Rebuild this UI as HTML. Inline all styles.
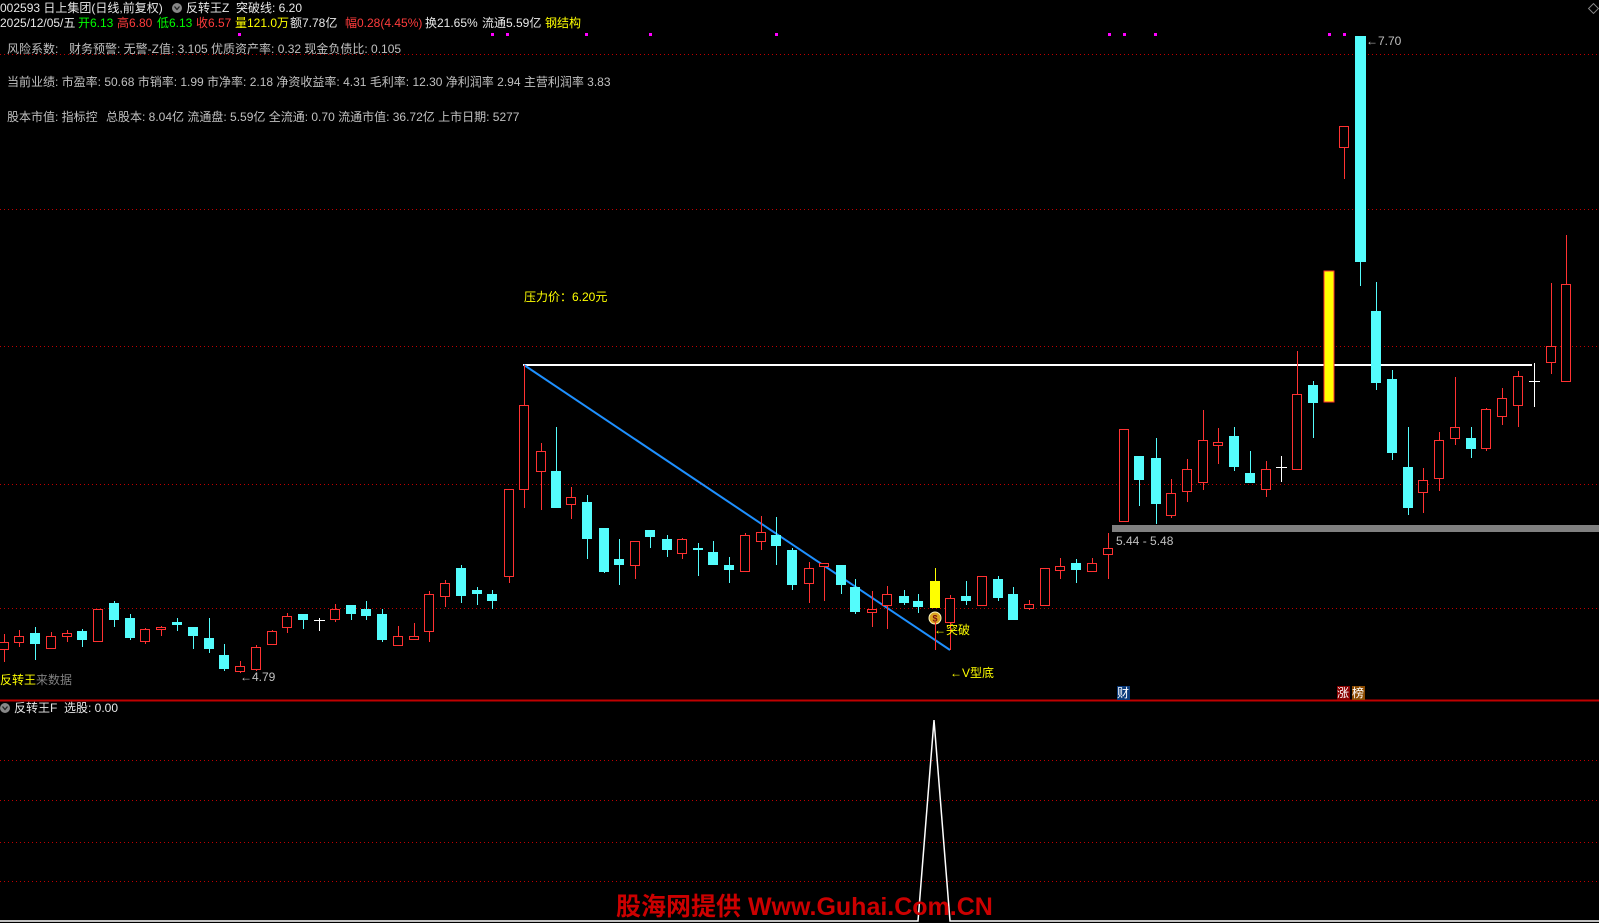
<!DOCTYPE html>
<html><head><meta charset="utf-8">
<style>
html,body{margin:0;padding:0;background:#000;}
body{width:1599px;height:923px;position:relative;overflow:hidden;font-family:"Liberation Sans","Noto Sans CJK SC",sans-serif;font-size:12px;}
.t{position:absolute;white-space:nowrap;line-height:14px;}
.w{color:#e8e8e8}.g{color:#c0c0c0}.gr{color:#00ff00}.r{color:#ff3c3c}.y{color:#ffff00}
svg{position:absolute;left:0;top:0;}
</style></head><body>
<svg width="1599" height="923" viewBox="0 0 1599 923">
<g stroke="#c00000" stroke-width="1" stroke-dasharray="1 3">
<path d="M0 54.5H1599M0 209.5H1599M0 346.5H1599M0 484.5H1599M0 608.5H1599M0 760.5H1599M0 800.5H1599M0 842.5H1599M0 881.5H1599"/>
</g>
<line x1="0" y1="700.5" x2="1599" y2="700.5" stroke="#c00000" stroke-width="2"/>
<rect x="1112" y="525" width="487" height="7" fill="#808080"/>
<line x1="523" y1="365" x2="1532" y2="365" stroke="#fff" stroke-width="2"/>
<line x1="524" y1="365" x2="950" y2="650" stroke="#1e90ff" stroke-width="2"/>
<g stroke="#ff3232" stroke-width="1" fill="#000">
<path d="M4.5 634V662M19.5 630V647M51.5 632V648M67.5 630V642M98.5 609V642M145.5 628V644M161.5 626V636M240.5 661V673M256.5 645V671M272.5 630V644M287.5 613V633M335.5 604V622M398.5 626V645M414.5 623V640M429.5 591V642M445.5 580V607M509.5 489V583M524.5 365V508M541.5 443V510M571.5 487V519M635.5 541V579M682.5 538V559M745.5 533V572M761.5 516V550M809.5 562V603M824.5 563V601M872.5 591V627M887.5 586V629M950.5 595V650M982.5 576V605M1029.5 600V610M1045.5 568V605M1060.5 558V579M1092.5 558V572M1108.5 533V579M1124.5 429V521M1171.5 479V518M1187.5 459V502M1203.5 410V490M1218.5 428V464M1266.5 461V497M1297.5 351V470M1344.5 126V179M1423.5 468V513M1439.5 432V491M1455.5 377V445M1486.5 408V451M1502.5 388V425M1518.5 371V427M1551.5 283V374M1566.5 235V381"/>
<rect x="-0.5" y="642.5" width="9" height="7"/>
<rect x="14.5" y="636.5" width="9" height="6"/>
<rect x="46.5" y="636.5" width="9" height="12"/>
<rect x="62.5" y="633.5" width="9" height="3"/>
<rect x="93.5" y="609.5" width="9" height="32"/>
<rect x="140.5" y="629.5" width="9" height="12"/>
<rect x="156.5" y="627.5" width="9" height="2"/>
<rect x="235.5" y="666.5" width="9" height="5"/>
<rect x="251.5" y="647.5" width="9" height="22"/>
<rect x="267.5" y="631.5" width="9" height="13"/>
<rect x="282.5" y="616.5" width="9" height="11"/>
<rect x="330.5" y="609.5" width="9" height="10"/>
<rect x="393.5" y="636.5" width="9" height="9"/>
<rect x="409.5" y="636.5" width="9" height="3"/>
<rect x="424.5" y="594.5" width="9" height="37"/>
<rect x="440.5" y="583.5" width="9" height="13"/>
<rect x="504.5" y="489.5" width="9" height="87"/>
<rect x="519.5" y="405.5" width="9" height="84"/>
<rect x="536.5" y="451.5" width="9" height="20"/>
<rect x="566.5" y="497.5" width="9" height="7"/>
<rect x="630.5" y="541.5" width="9" height="24"/>
<rect x="677.5" y="539.5" width="9" height="14"/>
<rect x="740.5" y="535.5" width="9" height="36"/>
<rect x="756.5" y="532.5" width="9" height="9"/>
<rect x="804.5" y="568.5" width="9" height="15"/>
<rect x="819.5" y="563.5" width="9" height="3"/>
<rect x="867.5" y="609.5" width="9" height="3"/>
<rect x="882.5" y="594.5" width="9" height="11"/>
<rect x="945.5" y="598.5" width="9" height="24"/>
<rect x="977.5" y="576.5" width="9" height="29"/>
<rect x="1024.5" y="604.5" width="9" height="4"/>
<rect x="1040.5" y="568.5" width="9" height="37"/>
<rect x="1055.5" y="566.5" width="9" height="4"/>
<rect x="1087.5" y="563.5" width="9" height="8"/>
<rect x="1103.5" y="548.5" width="9" height="6"/>
<rect x="1119.5" y="429.5" width="9" height="92"/>
<rect x="1166.5" y="493.5" width="9" height="22"/>
<rect x="1182.5" y="469.5" width="9" height="22"/>
<rect x="1198.5" y="440.5" width="9" height="42"/>
<rect x="1213.5" y="442.5" width="9" height="3"/>
<rect x="1261.5" y="469.5" width="9" height="20"/>
<rect x="1292.5" y="394.5" width="9" height="75"/>
<rect x="1339.5" y="126.5" width="9" height="21"/>
<rect x="1418.5" y="480.5" width="9" height="12"/>
<rect x="1434.5" y="440.5" width="9" height="38"/>
<rect x="1450.5" y="427.5" width="9" height="11"/>
<rect x="1481.5" y="409.5" width="9" height="39"/>
<rect x="1497.5" y="398.5" width="9" height="18"/>
<rect x="1513.5" y="376.5" width="9" height="29"/>
<rect x="1546.5" y="346.5" width="9" height="16"/>
<rect x="1561.5" y="284.5" width="9" height="97"/>
</g>
<g fill="#54fcfc">
<path stroke="#54fcfc" stroke-width="1" d="M35.5 627V660M82.5 629V647M114.5 601V627M130.5 614V640M177.5 618V631M193.5 627V649M209.5 618V653M224.5 644V671M303.5 614V629M351.5 605V620M366.5 601V620M382.5 609V642M461.5 565V603M477.5 587V605M492.5 590V609M556.5 427V508M587.5 495V559M604.5 528V573M619.5 539V585M650.5 530V548M667.5 535V557M698.5 543V576M713.5 541V565M729.5 557V583M776.5 517V565M792.5 548V590M841.5 565V594M855.5 579V614M904.5 590V605M918.5 594V613M966.5 581V605M998.5 576V601M1013.5 587V620M1076.5 559V583M1139.5 456V506M1156.5 438V524M1234.5 427V471M1250.5 451V483M1313.5 381V438M1360.5 36V286M1376.5 282V390M1392.5 370V460M1408.5 427V515M1471.5 427V458"/>
<rect x="30" y="633" width="10" height="11"/>
<rect x="77" y="631" width="10" height="9"/>
<rect x="109" y="603" width="10" height="17"/>
<rect x="125" y="618" width="10" height="20"/>
<rect x="172" y="622" width="10" height="3"/>
<rect x="188" y="627" width="10" height="9"/>
<rect x="204" y="638" width="10" height="11"/>
<rect x="219" y="655" width="10" height="14"/>
<rect x="298" y="614" width="10" height="6"/>
<rect x="346" y="605" width="10" height="9"/>
<rect x="361" y="609" width="10" height="7"/>
<rect x="377" y="614" width="10" height="26"/>
<rect x="456" y="568" width="10" height="28"/>
<rect x="472" y="590" width="10" height="4"/>
<rect x="487" y="594" width="10" height="7"/>
<rect x="551" y="471" width="10" height="37"/>
<rect x="582" y="502" width="10" height="37"/>
<rect x="599" y="528" width="10" height="44"/>
<rect x="614" y="559" width="10" height="6"/>
<rect x="645" y="530" width="10" height="7"/>
<rect x="662" y="539" width="10" height="11"/>
<rect x="693" y="548" width="10" height="2"/>
<rect x="708" y="552" width="10" height="13"/>
<rect x="724" y="565" width="10" height="5"/>
<rect x="771" y="535" width="10" height="11"/>
<rect x="787" y="550" width="10" height="35"/>
<rect x="836" y="565" width="10" height="20"/>
<rect x="850" y="587" width="10" height="25"/>
<rect x="899" y="596" width="10" height="7"/>
<rect x="913" y="601" width="10" height="6"/>
<rect x="961" y="596" width="10" height="5"/>
<rect x="993" y="579" width="10" height="19"/>
<rect x="1008" y="594" width="10" height="26"/>
<rect x="1071" y="563" width="10" height="7"/>
<rect x="1134" y="456" width="10" height="24"/>
<rect x="1151" y="458" width="10" height="46"/>
<rect x="1229" y="436" width="10" height="31"/>
<rect x="1245" y="473" width="10" height="10"/>
<rect x="1308" y="385" width="10" height="18"/>
<rect x="1355" y="36" width="11" height="226"/>
<rect x="1371" y="311" width="10" height="72"/>
<rect x="1387" y="379" width="10" height="74"/>
<rect x="1403" y="467" width="10" height="41"/>
<rect x="1466" y="438" width="10" height="11"/>
</g>
<path stroke="#fff" stroke-width="1" fill="none" d="M319.5 618V631M314 620.5H325M1281.5 456V482M1276 467.5H1287M1534.5 363V407M1529 381.5H1540"/>
<path stroke="#ffff00" d="M935.5 568V581"/>
<rect x="930" y="581" width="10" height="27" fill="#ffff00"/>
<rect x="1324" y="271" width="10" height="131" fill="#ffff00" stroke="#ff3232" stroke-width="1"/>
<circle cx="935" cy="618" r="6" fill="#d9a520" stroke="#fff6c0" stroke-width="1"/>
<text x="935" y="621.5" font-size="9" font-weight="bold" fill="#7a1010" text-anchor="middle" font-family="Liberation Sans, sans-serif">$</text>
<line x1="935.5" y1="622" x2="935.5" y2="650" stroke="#ff3232"/>
<g fill="#ff00ff">
<rect x="238" y="33" width="3" height="3"/><rect x="491" y="33" width="3" height="3"/><rect x="506" y="33" width="3" height="3"/><rect x="585" y="33" width="3" height="3"/><rect x="649" y="33" width="3" height="3"/><rect x="775" y="33" width="3" height="3"/><rect x="1108" y="33" width="3" height="3"/><rect x="1123" y="33" width="3" height="3"/><rect x="1154" y="33" width="3" height="3"/><rect x="1328" y="33" width="3" height="3"/><rect x="1343" y="33" width="3" height="3"/>
</g>
<rect x="1590" y="5" width="7" height="7" fill="none" stroke="#888" transform="rotate(45 1593.5 8.5)"/>
<polyline points="0,921 918,921 934,720 950,921 1599,921" fill="none" stroke="#fff" stroke-width="1.5"/>
<circle cx="177" cy="8" r="5" fill="#888"/><path d="M174.5 6.5l2.5 3 2.5-3" stroke="#222" stroke-width="1.3" fill="none"/>
<circle cx="5" cy="708" r="5" fill="#888"/><path d="M2.5 706.5l2.5 3 2.5-3" stroke="#222" stroke-width="1.3" fill="none"/>
<rect x="1117" y="686" width="13" height="14" fill="#0a3a7a"/>
<rect x="1337" y="686" width="13" height="14" fill="#8a0000"/>
<rect x="1352" y="686" width="13" height="14" fill="#8a4a00"/>
</svg>

<div class="t w" style="left:0;top:1px">002593 日上集团(日线,前复权)</div>
<div class="t w" style="left:186px;top:1px">反转王Z&nbsp; 突破线: 6.20</div>
<div class="t" style="left:0;top:16px"><span class="w">2025/12/05/五</span></div>
<div class="t gr" style="left:78px;top:16px">开6.13</div>
<div class="t r" style="left:117px;top:16px">高6.80</div>
<div class="t gr" style="left:157px;top:16px">低6.13</div>
<div class="t r" style="left:196px;top:16px">收6.57</div>
<div class="t y" style="left:235px;top:16px">量121.0万</div>
<div class="t w" style="left:290px;top:16px">额7.78亿</div>
<div class="t r" style="left:345px;top:16px">幅0.28(4.45%)</div>
<div class="t w" style="left:425px;top:16px">换21.65%</div>
<div class="t w" style="left:482px;top:16px">流通5.59亿</div>
<div class="t y" style="left:545px;top:16px">钢结构</div>
<div class="t g" style="left:7px;top:42px">风险系数:</div>
<div class="t g" style="left:69px;top:42px">财务预警: 无警-Z值: 3.105 优质资产率: 0.32 现金负债比: 0.105</div>
<div class="t g" style="left:7px;top:75px">当前业绩: 市盈率: 50.68 市销率: 1.99 市净率: 2.18 净资收益率: 4.31 毛利率: 12.30 净利润率 2.94 主营利润率 3.83</div>
<div class="t g" style="left:7px;top:110px">股本市值: 指标控</div>
<div class="t g" style="left:106px;top:110px">总股本: 8.04亿 流通盘: 5.59亿 全流通: 0.70 流通市值: 36.72亿 上市日期: 5277</div>
<div class="t g" style="left:1366px;top:34px">←7.70</div>
<div class="t y" style="left:524px;top:290px">压力价：6.20元</div>
<div class="t g" style="left:1116px;top:534px">5.44 - 5.48</div>
<div class="t y" style="left:934px;top:623px">←突破</div>
<div class="t y" style="left:950px;top:666px">←V型底</div>
<div class="t g" style="left:240px;top:670px">←4.79</div>
<div class="t" style="left:0;top:673px"><span class="y">反转王</span><span style="color:#808080">来数据</span></div>
<div class="t w" style="left:14px;top:701px">反转王F&nbsp; 选股: 0.00</div>
<div class="t" style="left:1117px;top:686px;color:#fff">财</div>
<div class="t" style="left:1337px;top:686px;color:#fff">涨</div>
<div class="t" style="left:1352px;top:686px;color:#fff">榜</div>
<div class="t" style="left:616px;top:894px;font-size:25px;line-height:27px;font-weight:bold;color:#cc0000;">股海网提供 Www.Guhai.Com.CN</div>
</body></html>
